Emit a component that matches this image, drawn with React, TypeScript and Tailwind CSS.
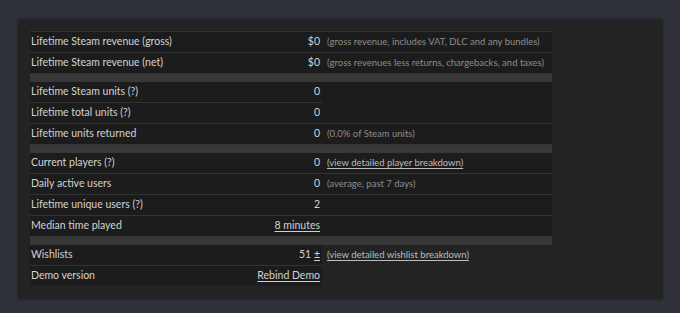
import React from 'react';

type Row = {
  label: string;
  value: React.ReactNode;
  note?: React.ReactNode;
  // note cell drawn without its own background/border
  bareNote?: boolean;
  noNoteBorder?: boolean;
  last?: boolean;
};

type Item = Row | 'sep';

const Link: React.FC<{ children: React.ReactNode }> = ({ children }) => (
  <span className="underline underline-offset-2 cursor-pointer">{children}</span>
);

const items: Item[] = [
  {
    label: 'Lifetime Steam revenue (gross)',
    value: '$0',
    note: <span className="text-[#8c8c8c]">(gross revenue, includes VAT, DLC and any bundles)</span>,
  },
  {
    label: 'Lifetime Steam revenue (net)',
    value: '$0',
    note: <span className="text-[#8c8c8c]">(gross revenues less returns, chargebacks, and taxes)</span>,
  },
  'sep',
  { label: 'Lifetime Steam units (?)', value: '0', noNoteBorder: true },
  { label: 'Lifetime total units (?)', value: '0' },
  {
    label: 'Lifetime units returned',
    value: '0',
    note: <span className="text-[#8c8c8c]">(0.0% of Steam units)</span>,
  },
  'sep',
  {
    label: 'Current players (?)',
    value: '0',
    note: (
      <span className="text-[#bdbdbd]">
        <Link>(view detailed player breakdown)</Link>
      </span>
    ),
  },
  {
    label: 'Daily active users',
    value: '0',
    note: <span className="text-[#8c8c8c]">(average, past 7 days)</span>,
  },
  { label: 'Lifetime unique users (?)', value: '2' },
  { label: 'Median time played', value: <Link>8 minutes</Link> },
  'sep',
  {
    label: 'Wishlists',
    value: (
      <>
        51 <Link>±</Link>
      </>
    ),
    note: (
      <span className="text-[#bdbdbd]">
        <Link>(view detailed wishlist breakdown)</Link>
      </span>
    ),
    bareNote: true,
  },
  { label: 'Demo version', value: <Link>Rebind Demo</Link>, bareNote: true, last: true },
];

const StatRow: React.FC<{ row: Row }> = ({ row }) => {
  const cell = row.last ? 'h-[20px]' : 'h-[21px] border-b border-[#333333]';
  return (
    <div className="flex">
      <div className={`flex w-[292px] shrink-0 items-center bg-[#1c1c1c] pb-[1px] ${cell}`}>
        <div className="flex-1 pl-[1px] text-[#d2d2d2]">{row.label}</div>
        <div className="pr-[2px] text-right text-[#d2d2d2]">{row.value}</div>
      </div>
      <div
        className={`flex min-w-0 flex-1 items-center whitespace-nowrap pl-[5px] pb-[1px] text-[9.5px] ${
          row.bareNote
            ? 'h-[21px]'
            : row.noNoteBorder
              ? 'h-[21px] bg-[#1c1c1c]'
              : `bg-[#1c1c1c] ${cell}`
        }`}
      >
        {row.note}
      </div>
    </div>
  );
};

export default function App() {
  return (
    <div
      className="min-h-screen bg-[#2e313a] px-[18px] py-[19px]"
      style={{ fontFamily: 'Lato, "Noto Sans", Arial, sans-serif' }}
    >
      <div className="w-[645px] rounded-[2px] bg-[#232323] px-[12px] pt-[12px] pb-[12px] shadow-[0_0_3px_rgba(0,0,0,0.35)]">
        <div className="w-[522px] border-t border-[#333333] text-[10.5px] leading-none">
          {items.map((it, i) =>
            it === 'sep' ? (
              <div key={i} className="h-[8px] bg-[#383838]" />
            ) : (
              <StatRow key={i} row={it} />
            ),
          )}
        </div>
      </div>
    </div>
  );
}
